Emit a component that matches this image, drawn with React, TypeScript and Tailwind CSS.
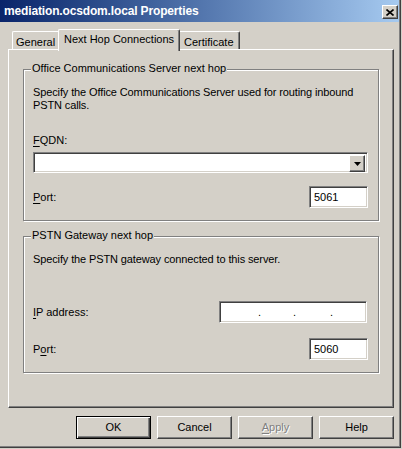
import React from 'react';

const raised =
  'border border-t-white border-l-white border-r-[#404040] border-b-[#404040] shadow-[inset_-1px_-1px_0_#808080]';
const sunken =
  'border border-t-[#808080] border-l-[#808080] border-r-white border-b-white shadow-[inset_1px_1px_0_#404040,inset_-1px_-1px_0_#d4d0c8] bg-white';

const GroupBox = ({ title, className, children }: { title: string; className: string; children: React.ReactNode }) => (
  <div className={`relative ml-[14px] w-[356px] border border-[#808080] shadow-[inset_1px_1px_0_#fff,1px_1px_0_#fff] pt-[16px] pl-[9px] pr-[10px] ${className}`}>
    <span className="absolute -top-[8px] left-[7px] px-[1px] leading-[13px] bg-[#d4d0c8]">{title}</span>
    {children}
  </div>
);

const Button = ({ children, isDefault, disabled }: { children: React.ReactNode; isDefault?: boolean; disabled?: boolean }) => (
  <div
    className={`w-[75px] h-[23px] flex items-center justify-center ${
      isDefault
        ? 'border border-black shadow-[inset_1px_1px_0_#fff,inset_-1px_-1px_0_#404040,inset_-2px_-2px_0_#808080]'
        : raised
    } ${disabled ? 'text-[#808080] [text-shadow:1px_1px_0_#fff]' : ''}`}
  >
    {children}
  </div>
);

export default function App() {
  return (
    <div className="w-[402px] h-[449px] bg-[#d4d0c8] overflow-hidden text-[11px] text-black font-['Liberation_Sans',Arial,sans-serif]">
      <div className="w-[401px] h-[448px] border-r border-b border-r-[#404040] border-b-[#404040] shadow-[inset_-1px_-1px_0_#808080]">
        {/* title bar */}
        <div className="w-[399px] h-[22px] flex justify-between bg-linear-to-r from-[#0a246a] to-[#a6caf0]">
          <span className="pl-[4px] leading-[22px] text-[12px] font-bold text-white tracking-[-0.15px]">
            mediation.ocsdom.local Properties
          </span>
          <div className={`mt-[5px] mr-[1px] w-[16px] h-[14px] flex items-center justify-center bg-[#d4d0c8] ${raised}`}>
            <svg width="8" height="7" viewBox="0 0 8 7">
              <path d="M0.5 0.5 L7.5 6.5 M7.5 0.5 L0.5 6.5" stroke="#000" strokeWidth="1.6" />
            </svg>
          </div>
        </div>

        <div className="pl-[8px] pt-[7px]">
          {/* tabs */}
          <div className="flex items-end h-[20px] pl-[4px] relative z-10">
            <div className="w-[46px] h-[18px] border-l border-t border-white rounded-tl-[2px] pl-[3px] pt-[4px] leading-[13px]">
              General
            </div>
            <div className="w-[122px] h-[22px] -mb-[2px] bg-[#d4d0c8] border-l border-t border-r border-t-white border-l-white border-r-[#404040] rounded-t-[2px] shadow-[inset_-1px_0_0_#808080] pl-[5px] pt-[3px] leading-[13px]">
              Next Hop Connections
            </div>
            <div className="w-[60px] h-[18px] border-t border-r border-t-white border-r-[#404040] rounded-tr-[2px] shadow-[inset_-1px_0_0_#808080] pl-[4px] pt-[4px] leading-[13px]">
              Certificate
            </div>
          </div>

          {/* tab panel */}
          <div className="w-[386px] h-[359px] border-t border-l border-t-white border-l-white border-r border-b border-r-[#404040] border-b-[#404040] shadow-[inset_-1px_-1px_0_#808080] pt-[19px]">
            <GroupBox title="Office Communications Server next hop" className="h-[152px]">
              <p className="leading-[13px] tracking-[-0.12px]">
                Specify the Office Communications Server used for routing inbound
                <br />
                PSTN calls.
              </p>
              <div className="mt-[22px] leading-[13px]">
                <u className="underline-offset-[2px]">F</u>QDN:
              </div>
              <div className={`mt-[5px] w-[335px] h-[21px] p-[2px] flex justify-end ${sunken}`}>
                <div className={`w-[16px] h-[17px] bg-[#d4d0c8] flex items-center justify-center ${raised}`}>
                  <svg width="7" height="4" viewBox="0 0 7 4">
                    <path d="M0 0 H7 L3.5 4 Z" fill="#000" />
                  </svg>
                </div>
              </div>
              <div className="mt-[13px] flex items-center justify-between">
                <span className="leading-[13px]">
                  <u className="underline-offset-[2px]">P</u>ort:
                </span>
                <div className={`w-[59px] h-[22px] pl-[4px] leading-[20px] ${sunken}`}>5061</div>
              </div>
            </GroupBox>

            <GroupBox title="PSTN Gateway next hop" className="mt-[15px] h-[137px]">
              <p className="leading-[13px] tracking-[-0.12px]">Specify the PSTN gateway connected to this server.</p>
              <div className="mt-[35px] flex items-center justify-between pr-[1px]">
                <span className="leading-[13px]">
                  <u className="underline-offset-[2px]">I</u>P address:
                </span>
                <div className={`w-[148px] h-[22px] flex items-center ${sunken}`}>
                  <span className="ml-[38px] w-[3px] leading-[13px]">.</span>
                  <span className="ml-[32px] w-[3px] leading-[13px]">.</span>
                  <span className="ml-[34px] w-[3px] leading-[13px]">.</span>
                </div>
              </div>
              <div className="mt-[15px] flex items-center justify-between">
                <span className="leading-[13px]">
                  P<u className="underline-offset-[2px]">o</u>rt:
                </span>
                <div className={`w-[59px] h-[22px] pl-[4px] leading-[20px] ${sunken}`}>5060</div>
              </div>
            </GroupBox>
          </div>

          {/* dialog buttons */}
          <div className="mt-[8px] w-[386px] flex justify-end gap-[6px]">
            <Button isDefault>OK</Button>
            <Button>Cancel</Button>
            <Button disabled>
              <u className="underline-offset-[2px]">A</u>pply
            </Button>
            <Button>Help</Button>
          </div>
        </div>
      </div>
    </div>
  );
}
